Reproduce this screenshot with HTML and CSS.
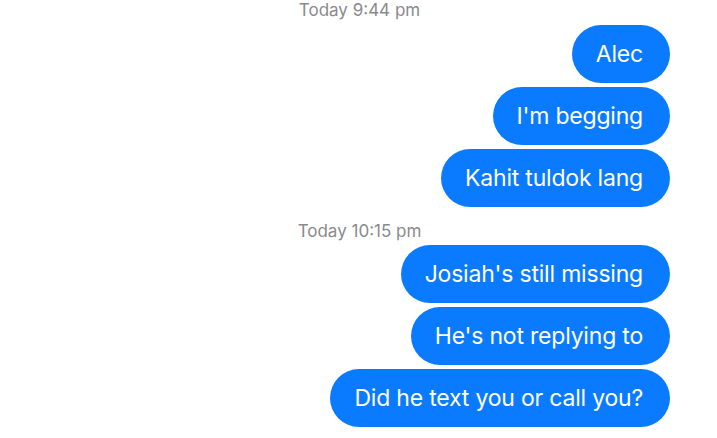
FILE: index.html
```html
<!DOCTYPE html>
<html lang="en">
<head>
  <meta charset="UTF-8" />
  <meta name="viewport" content="width=device-width, initial-scale=1.0" />
  <title>Messages</title>
  <link rel="stylesheet" href="styles.css">
</head>
<body>

  <div class="thread">
    <div class="stamp">Today 9:44 pm</div>
    <div class="group">
      <div class="bubble">Alec</div>
      <div class="bubble">I'm begging</div>
      <div class="bubble">Kahit tuldok lang</div>
    </div>

    <div class="stamp">Today 10:15 pm</div>
    <div class="group">
      <div class="bubble">Josiah's still missing</div>
      <div class="bubble">He's not replying to</div>
      <div class="bubble">Did he text you or call you?</div>
    </div>
  </div>

</body>
</html>
```

FILE: styles.css
```css
body {
  margin: 0;
  background-color: #fff;
  font-family: Inter, "Liberation Sans", sans-serif;
}
.thread {
  display: flex;
  flex-direction: column;
}
.stamp {
  font-size: 17px;
  line-height: 20px;
  color: #8a8a8e;
  text-align: center;
  padding-left: 2px;
  margin-bottom: 5px;
}
.group + .stamp {
  margin-top: 14px;
  margin-bottom: 4px;
}
.group {
  display: flex;
  flex-direction: column;
  align-items: flex-end;
  gap: 4px;
  margin-right: 47px;
}
.bubble {
  background-color: #0a7bfe;
  color: #fff;
  font-size: 23px;
  line-height: 28px;
  padding: 15px 27px 15px 24px;
  border-radius: 29px;
  letter-spacing: -0.2px;
}
```
